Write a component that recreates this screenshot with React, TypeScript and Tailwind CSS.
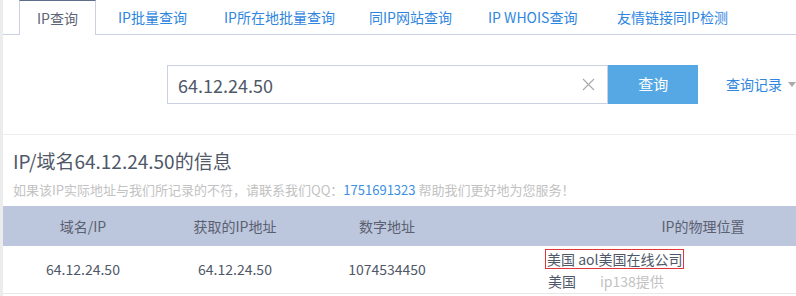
import React from "react";

// tab widths measured from the reference (first tab is the active one)
const tabs: [string, string][] = [
  ["IP查询", "w-[77px]"],
  ["IP批量查询", "w-[106px]"],
  ["IP所在地批量查询", "w-[145px]"],
  ["同IP网站查询", "w-[119px]"],
  ["IP WHOIS查询", "w-[129px]"],
  ["友情链接同IP检测", "pr-[21px]"],
];

export default function App() {
  const ip = "64.12.24.50";

  return (
    <div
      className="w-[796px] h-[296px] flex bg-white overflow-hidden text-[#555b66]"
      style={{ fontFamily: '"Noto Sans CJK SC", "Liberation Sans", sans-serif' }}
    >
      {/* left gutter */}
      <div className="w-[3px] shrink-0 bg-[#ececec]" />

      <div className="flex-1 min-w-0">
        {/* tabs */}
        <div className="h-[35px] flex items-end pl-[16px] border-b border-[#c8d0e2]">
          {tabs.map(([t, w], i) =>
            i === 0 ? (
              <div
                key={t}
                className={`${w} h-[35px] -mb-px shrink-0 flex items-center justify-center bg-white border-x border-t border-x-[#c8d0e2] border-t-[#5f6d8c] text-[14px] text-[#5d6577]`}
              >
                {t}
              </div>
            ) : (
              <div
                key={t}
                className={`${w} h-[34px] pl-[22px] shrink-0 flex items-center text-[14px] text-[#2f86de] whitespace-nowrap`}
              >
                {t}
              </div>
            )
          )}
        </div>

        {/* search */}
        <div className="h-[100px] border-b border-[#eeeeee] pt-[30px] pl-[164px] flex items-start">
          <div className="w-[443px] h-[39px] border border-[#c8d0e2] flex items-center pl-[10px] pr-[12px]">
            <span className="flex-1 text-[18px] text-[#4f5868] leading-none">{ip}</span>
            <svg width="13" height="13" viewBox="0 0 13 13">
              <path d="M1 1L12 12M12 1L1 12" stroke="#a9a9a9" strokeWidth="1.1" />
            </svg>
          </div>
          <button className="w-[90px] h-[39px] bg-[#56a8e4] text-white text-[15px]">查询</button>
          <div className="ml-[28px] h-[39px] flex items-center gap-[6px] text-[14px] text-[#2f86de] whitespace-nowrap">
            查询记录
            <span className="w-0 h-0 border-x-[4px] border-x-transparent border-t-[5px] border-t-[#aaaaaa]" />
          </div>
        </div>

        {/* info */}
        <div className="pl-[10px] pt-[14px]">
          <h1 className="text-[19px] leading-[24px] text-[#4f5868]">IP/域名{ip}的信息</h1>
          <p className="mt-[8px] text-[13px] leading-[18px] text-[#c2c2c2] whitespace-nowrap">
            如果该IP实际地址与我们所记录的不符，请联系我们QQ：
            <span className="text-[#3b8fe4]">1751691323</span> 帮助我们更好地为您服务！
          </p>
        </div>

        {/* table */}
        <div className="mt-[7px] w-[936px]">
          <div className="h-[40px] bg-[#bcc6dd] grid grid-cols-[160px_144px_160px_472px] items-center text-[14px] text-[#5b6070] text-center">
            <div>域名/IP</div>
            <div>获取的IP地址</div>
            <div>数字地址</div>
            <div>IP的物理位置</div>
          </div>
          <div className="h-[48px] border-b border-[#e8e8e8] grid grid-cols-[160px_144px_160px_472px] items-center text-[14px] text-[#4f5868]">
            <div className="text-center">{ip}</div>
            <div className="text-center">{ip}</div>
            <div className="text-center">1074534450</div>
            <div className="pl-[78px] flex flex-col items-start gap-[3px]">
              <span className="border border-[#e2363b] h-[20px] px-px leading-[18px]">美国 aol美国在线公司</span>
              <span className="pl-[3px] leading-[18px]">
                美国<span className="ml-[24px] text-[#c2c2c2]">ip138提供</span>
              </span>
            </div>
          </div>
        </div>
      </div>
    </div>
  );
}
